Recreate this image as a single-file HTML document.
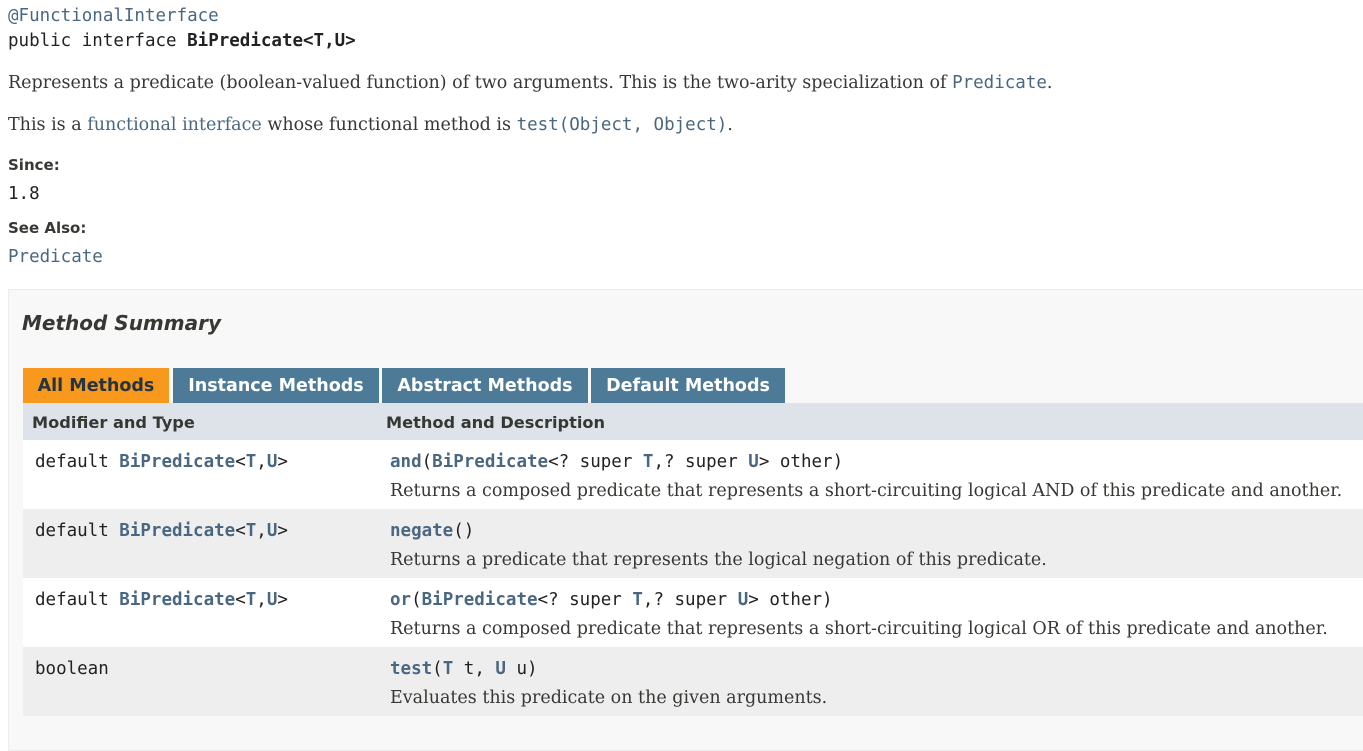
<!DOCTYPE html>
<html><head><meta charset="utf-8"><style>
body{margin:0;width:1363px;height:723px;overflow:hidden;background:#fff;color:#353833;position:relative;font-family:"DejaVu Serif","Liberation Serif",serif;font-size:17.5px}
.a{position:absolute;white-space:nowrap}
.m{font-family:"DejaVu Sans Mono","Liberation Mono",monospace;font-size:17.5px;color:#222}
.s{font-family:"DejaVu Sans","Liberation Sans",sans-serif;font-weight:bold}
.l{color:#4a6782}
b.l{font-weight:bold}
.box{position:absolute;left:8px;top:289px;width:1360px;height:460px;background:#f8f8f8;border:1px solid #ededed}
.tab{position:absolute;top:368px;height:35px;line-height:37px;color:#fff;background:#4d7a97;font-family:"DejaVu Sans","Liberation Sans",sans-serif;font-weight:bold;font-size:17.5px;text-align:center}
.row{position:absolute;left:23px;width:1340px;height:69px}
</style></head><body>
<div class="a m l" style="left:8px;top:6px">@FunctionalInterface</div>
<div class="a m" style="left:8px;top:31px">public interface <b>BiPredicate&lt;T,U&gt;</b></div>
<div class="a" style="left:8px;top:73px">Represents a predicate (boolean-valued function) of two arguments. This is the two-arity specialization of <span class="m l">Predicate</span>.</div>
<div class="a" style="left:8px;top:115px">This is a <span class="l">functional interface</span> whose functional method is <span class="m l">test(Object, Object)</span>.</div>
<div class="a s" style="left:8px;top:156px;font-size:15px">Since:</div>
<div class="a m" style="left:8px;top:184px">1.8</div>
<div class="a s" style="left:8px;top:219px;font-size:15px">See Also:</div>
<div class="a m l" style="left:8px;top:247px">Predicate</div>
<div class="box"></div>
<div class="a s" style="left:22px;top:311px;font-size:20px;font-style:italic">Method Summary</div>
<div class="tab" style="left:23px;width:146px;background:#f8981d;color:#253441">All Methods</div>
<div class="tab" style="left:173px;width:206px">Instance Methods</div>
<div class="tab" style="left:382px;width:206px">Abstract Methods</div>
<div class="tab" style="left:591px;width:194px">Default Methods</div>
<div class="a" style="left:23px;top:403px;width:1340px;height:37px;background:#dee3e9"></div>
<div class="a s" style="left:32px;top:413px;font-size:16.2px">Modifier and Type</div>
<div class="a s" style="left:386px;top:413px;font-size:16.2px">Method and Description</div>
<div class="row" style="top:440px;background:#fff"></div>
<div class="row" style="top:509px;background:#eeeeef"></div>
<div class="row" style="top:578px;background:#fff"></div>
<div class="row" style="top:647px;background:#eeeeef"></div>

<div class="a m" style="left:35px;top:452px">default <b class="l">BiPredicate</b>&lt;<b class="l">T</b>,<b class="l">U</b>&gt;</div>
<div class="a m" style="left:390px;top:452px"><b class="l">and</b>(<b class="l">BiPredicate</b>&lt;? super <b class="l">T</b>,? super <b class="l">U</b>&gt; other)</div>
<div class="a" style="left:390px;top:481px">Returns a composed predicate that represents a short-circuiting logical AND of this predicate and another.</div>

<div class="a m" style="left:35px;top:521px">default <b class="l">BiPredicate</b>&lt;<b class="l">T</b>,<b class="l">U</b>&gt;</div>
<div class="a m" style="left:390px;top:521px"><b class="l">negate</b>()</div>
<div class="a" style="left:390px;top:550px">Returns a predicate that represents the logical negation of this predicate.</div>

<div class="a m" style="left:35px;top:590px">default <b class="l">BiPredicate</b>&lt;<b class="l">T</b>,<b class="l">U</b>&gt;</div>
<div class="a m" style="left:390px;top:590px"><b class="l">or</b>(<b class="l">BiPredicate</b>&lt;? super <b class="l">T</b>,? super <b class="l">U</b>&gt; other)</div>
<div class="a" style="left:390px;top:619px">Returns a composed predicate that represents a short-circuiting logical OR of this predicate and another.</div>

<div class="a m" style="left:35px;top:659px">boolean</div>
<div class="a m" style="left:390px;top:659px"><b class="l">test</b>(<b class="l">T</b> t, <b class="l">U</b> u)</div>
<div class="a" style="left:390px;top:688px">Evaluates this predicate on the given arguments.</div>
</body></html>
